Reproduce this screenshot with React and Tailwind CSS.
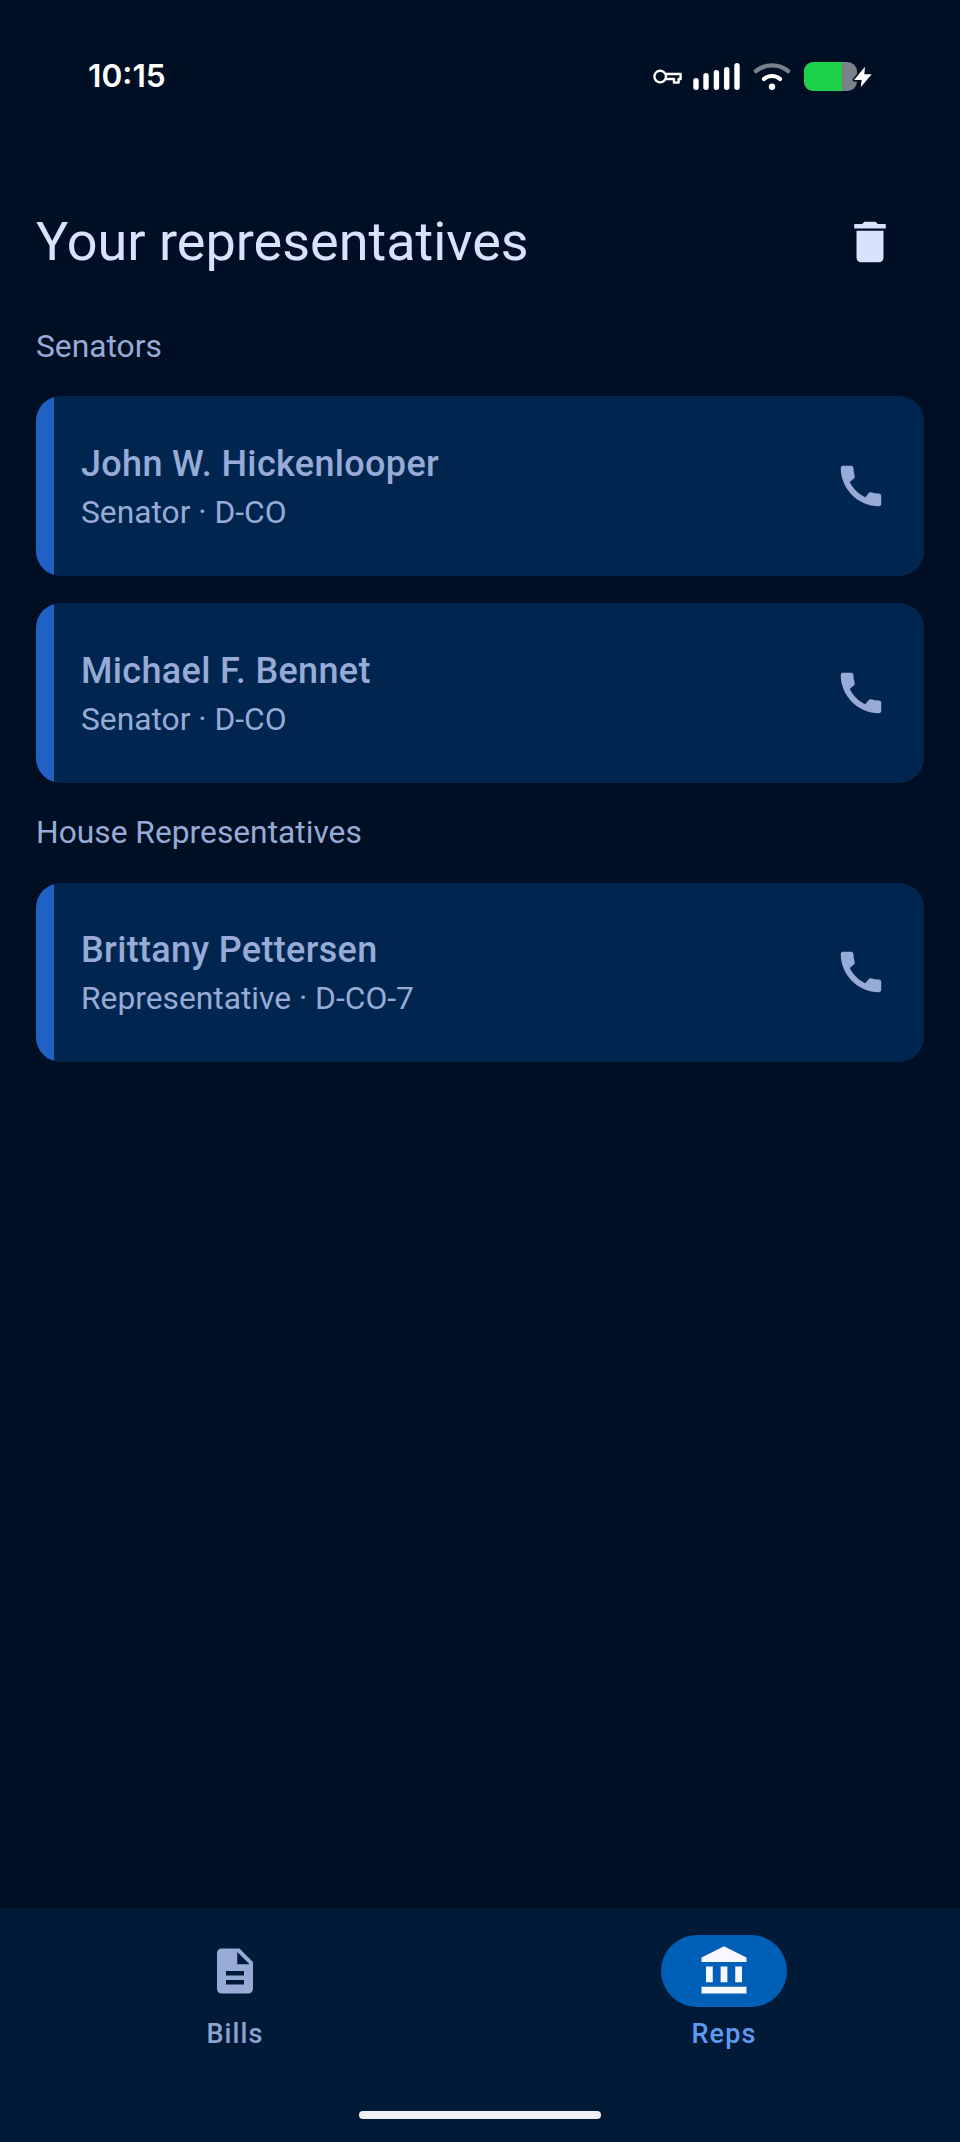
import React from 'react';

const reps = {
  senators: [
    { name: 'John W. Hickenlooper', role: 'Senator · D-CO' },
    { name: 'Michael F. Bennet', role: 'Senator · D-CO' },
  ],
  house: [{ name: 'Brittany Pettersen', role: 'Representative · D-CO-7' }],
};

const StatusIcons = () => (
  <svg width="225" height="32" viewBox="0 0 225 32" fill="none" className="block">
    {/* key */}
    <g stroke="#fff" strokeWidth="2.4" fill="none">
      <circle cx="10.2" cy="16.6" r="5.8" />
      <path d="M16 14h14.6v5h-2v3.6h-4.6V19H16" strokeLinejoin="round" />
    </g>
    {/* signal */}
    <g fill="#fff">
      <rect x="43.3" y="18" width="5.4" height="12" rx="2.7" />
      <rect x="53.3" y="13" width="5.4" height="17" rx="2.7" />
      <rect x="63.7" y="10" width="5.4" height="20" rx="2.7" />
      <rect x="74" y="7" width="5.4" height="23" rx="2.7" />
      <rect x="84.3" y="3" width="5.4" height="27" rx="2.7" />
    </g>
    {/* wifi */}
    <path d="M106 11c9-7.5 23-7.5 32 0" stroke="#7b8188" strokeWidth="4.4" strokeLinecap="round" />
    <path d="M114 19c4.500-4 11.500-4 16 0" stroke="#fff" strokeWidth="4.2" strokeLinecap="round" />
    <circle cx="122" cy="26.700" r="3.200" fill="#fff" />
    {/* battery */}
    <rect x="154" y="2" width="53" height="29" rx="9.500" fill="#7b8188" />
    <path d="M163.500 2H192v29h-28.500a9.500 9.500 0 0 1-9.500-9.500v-10a9.500 9.500 0 0 1 9.500-9.500z" fill="#1ed14b" />
    <path d="M215 6.700L204 20h7.700l-1 7.300L221.700 14.300h-7.400z" fill="#fff" stroke="#000f24" strokeWidth="3" paintOrder="stroke" strokeLinejoin="round" />
  </svg>
);

const PhoneIcon = () => (
  <svg width="54" height="54" viewBox="0 0 24 24" fill="#97abd6">
    <path d="M20.01 15.38c-1.23 0-2.42-.2-3.53-.56-.35-.12-.74-.03-1.01.24l-1.57 1.97c-2.83-1.35-5.48-3.9-6.89-6.83l1.95-1.66c.27-.28.35-.67.24-1.02-.37-1.11-.56-2.3-.56-3.53 0-.54-.45-.99-.99-.99H4.19C3.65 3 3 3.24 3 3.99 3 13.28 10.73 21 20.01 21c.71 0 .99-.63.99-1.18v-3.45c0-.54-.45-.99-.99-.99z" />
  </svg>
);

const RepCard = ({ name, role }) => (
  <div className="flex h-[179.5px] overflow-hidden rounded-[25px] bg-[#00264f]">
    <div className="w-[18px] bg-[#2161c3]" />
    <div className="flex flex-1 items-center justify-between pl-[27px] pr-[36px]">
      <div className="pt-[5px]">
        <div className="text-[36px] leading-[50px] font-medium tracking-[0.34px] text-[#97abd6]">{name}</div>
        <div className="mt-[-1px] text-[31.75px] leading-[50px] text-[#97abd6]">{role}</div>
      </div>
      <PhoneIcon />
    </div>
  </div>
);

export default function App() {
  return (
    <div className="flex h-[2142px] w-[960px] flex-col bg-[#000f24] font-['Roboto',sans-serif]">
      <div className="flex h-[152px] items-start justify-between pl-[88px] pr-[85px] pt-[58px]">
        <span className="font-['Inter',sans-serif] text-[31.7px] leading-[36px] font-semibold text-white">10:15</span>
        <div className="pt-[2px]">
          <StatusIcons />
        </div>
      </div>

      <main className="flex-1 px-[36px]">
        <div className="flex h-[180px] items-center justify-between">
          <h1 className="text-[54px] leading-[64px] font-normal text-[#d8e2ff]">Your representatives</h1>
          <svg width="54" height="54" viewBox="0 0 24 24" fill="#d8e2ff" className="mr-[27px]">
            <path d="M6 19c0 1.1.9 2 2 2h8c1.1 0 2-.9 2-2V7H6v12zM19 4h-3.5l-1-1h-5l-1 1H5v2h14V4z" />
          </svg>
        </div>

        <h2 className="mt-[-8px] text-[31.75px] leading-[46px] font-normal text-[#97abd6]">Senators</h2>
        <div className="mt-[26px] flex flex-col gap-[27.5px]">
          {reps.senators.map((r) => (
            <RepCard key={r.name} {...r} />
          ))}
        </div>

        <h2 className="mt-[27px] text-[31.75px] leading-[46px] font-normal text-[#97abd6]">House Representatives</h2>
        <div className="mt-[27px] flex flex-col gap-[27.5px]">
          {reps.house.map((r) => (
            <RepCard key={r.name} {...r} />
          ))}
        </div>
      </main>

      <nav className="relative flex h-[234px] gap-[363px] bg-[#001a38] pl-[172px] pt-[27px]">
        <div className="flex w-[126px] flex-col items-center">
          <div className="flex h-[72px] w-[126px] items-center justify-center">
            <svg width="54" height="54" viewBox="0 0 24 24" fill="#97abd6">
              <path d="M14 2H6c-1.1 0-1.99.9-1.99 2L4 20c0 1.1.89 2 1.99 2H18c1.1 0 2-.9 2-2V8l-6-6zm2 16H8v-2h8v2zm0-4H8v-2h8v2zm-3-5V3.5L18.5 9H13z" />
            </svg>
          </div>
          <span className="mt-[9px] text-[27px] leading-[36px] font-medium tracking-[1.125px] text-[#8ba3d0]">Bills</span>
        </div>
        <div className="flex w-[126px] flex-col items-center">
          <div className="flex h-[72px] w-[126px] items-center justify-center rounded-full bg-[#0060b8]">
            <svg width="54" height="54" viewBox="0 0 24 24" fill="#f6f7ff">
              <path d="M4 10h3v7H4zM10.500 10h3v7h-3zM2 19h20v3H2zM17 10h3v7h-3zM12 1 2 6v2h20V6z" />
            </svg>
          </div>
          <span className="mt-[9px] text-[27px] leading-[36px] font-medium tracking-[1.125px] text-[#5f9bf3]">Reps</span>
        </div>
        <div className="absolute bottom-[23px] left-[359px] h-[8px] w-[242px] rounded-full bg-[#eef0f3]" />
      </nav>
    </div>
  );
}
